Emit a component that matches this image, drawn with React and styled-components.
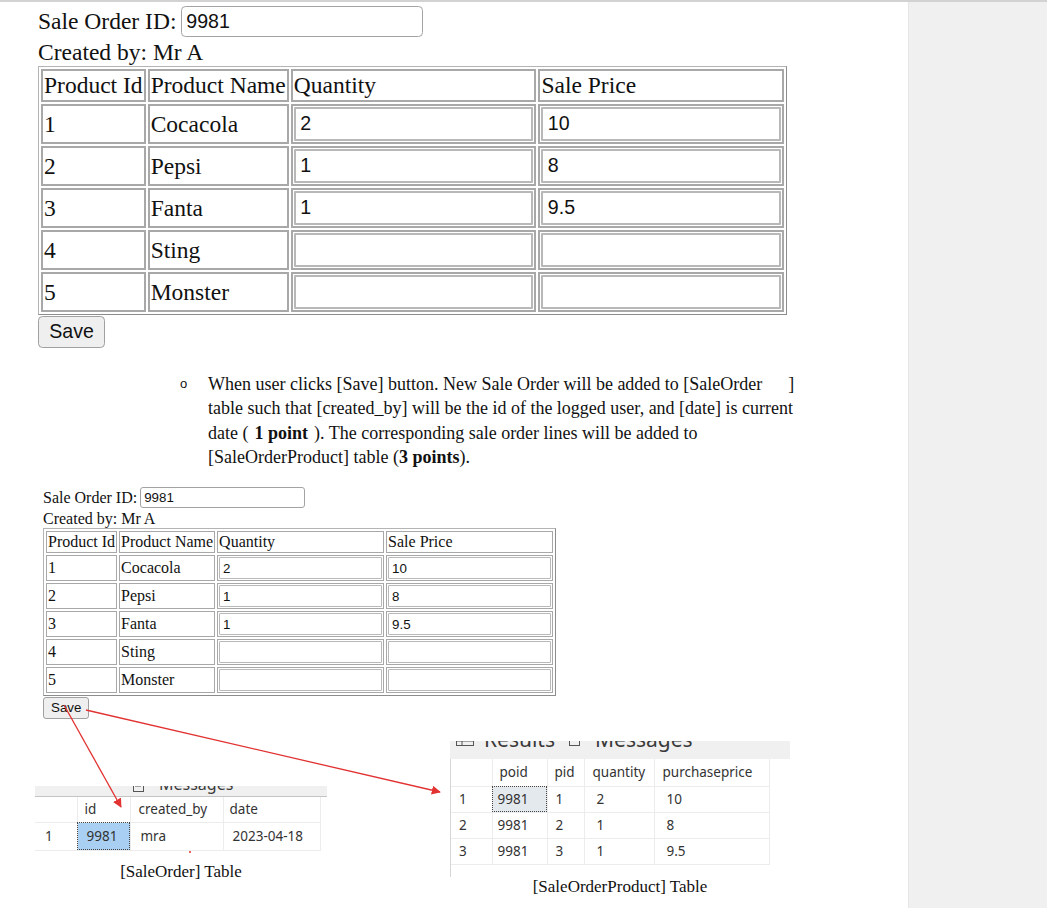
import React from "react";
import styled, { createGlobalStyle } from "styled-components";

const GlobalStyle = createGlobalStyle`
  html, body { margin: 0; padding: 0; background: #fff; }
  body { font-family: "Liberation Serif", "Times New Roman", serif; color: #111; }
`;

const Page = styled.div`
  display: flex;
  width: 1047px;
  height: 908px;
  border-top: 2px solid #d2d2d2;
  box-sizing: border-box;
  overflow: hidden;
`;

const Sheet = styled.main`
  position: relative;
  width: 908px;
  background: #fff;
`;

const SidePanel = styled.aside`
  flex: 1;
  background: #f0f0f0;
  border-left: 1px solid #e6e6e6;
`;

/* ---------- sale order form (rendered at two zoom levels) ---------- */

const FormBlock = styled.div`
  margin: ${p => p.$top}px 0 0 ${p => p.$left}px;
  font-family: "Liberation Serif", "Times New Roman", serif;
  font-size: ${p => 16 * p.$s}px;
`;

const FieldLine = styled.div`
  display: flex;
  align-items: center;
  gap: ${p => 3 * p.$s}px;
  height: ${p => p.$h * p.$s}px;
  white-space: nowrap;
`;

const TextBox = styled.input`
  box-sizing: border-box;
  width: ${p => 165 * p.$s}px;
  height: ${p => 21 * p.$s}px;
  padding: 0 ${p => 3 * p.$s}px;
  border: 1px solid #a3a3a3;
  border-radius: ${p => 3 * p.$s}px;
  font-family: "Liberation Sans", Arial, sans-serif;
  font-size: ${p => 13.33 * p.$s}px;
  color: #111;
  background: #fff;
  outline: none;
`;

const OrderTable = styled.table`
  border-collapse: separate;
  border-spacing: ${p => 2 * p.$s}px;
  border: 1px solid #b4b4b4;
  border-right-color: #8c8c8c;
  border-bottom-color: #8c8c8c;
`;

const Cell = styled.td`
  border: ${p => (p.$s > 1.2 ? 2 : 1)}px solid #a8a8a8;
  padding: 1px;
  text-align: left;
  font-weight: normal;
  line-height: ${p => 18 * p.$s}px;
  vertical-align: middle;
  white-space: nowrap;
`;

const CellBox = styled.input`
  box-sizing: border-box;
  display: block;
  width: ${p => 163 * p.$s}px;
  height: ${p => p.$h}px;
  padding: 0 ${p => 3 * p.$s}px;
  border: ${p => (p.$s > 1.2 ? 2 : 1)}px solid #b8b8b8;
  border-radius: 1px;
  font-family: "Liberation Sans", Arial, sans-serif;
  font-size: ${p => 13.33 * p.$s}px;
  color: #111;
  background: #fff;
  outline: none;
`;

const SaveButton = styled.button`
  display: block;
  margin-top: 1px;
  height: ${p => 21.5 * p.$s}px;
  padding: 0 ${p => 7 * p.$s}px;
  border: 1px solid #a0a0a0;
  border-radius: ${p => 3 * p.$s}px;
  background: #efefef;
  font-family: "Liberation Sans", Arial, sans-serif;
  font-size: ${p => 13.33 * p.$s}px;
  color: #111;
`;

const products = [
  { id: 1, name: "Cocacola", qty: "2", price: "10" },
  { id: 2, name: "Pepsi", qty: "1", price: "8" },
  { id: 3, name: "Fanta", qty: "1", price: "9.5" },
  { id: 4, name: "Sting", qty: "", price: "" },
  { id: 5, name: "Monster", qty: "", price: "" },
];

function SaleOrderForm({ s, left, top, boxH }) {
  return (
    <FormBlock $s={s} $left={left} $top={top}>
      <FieldLine $s={s} $h={24}>
        Sale Order ID:
        <TextBox $s={s} defaultValue="9981" readOnly />
      </FieldLine>
      <FieldLine $s={s} $h={18.5}>Created by: Mr A</FieldLine>
      <OrderTable $s={s}>
        <thead>
          <tr>
            <Cell as="th" $s={s}>Product Id</Cell>
            <Cell as="th" $s={s}>Product Name</Cell>
            <Cell as="th" $s={s}>Quantity</Cell>
            <Cell as="th" $s={s}>Sale Price</Cell>
          </tr>
        </thead>
        <tbody>
          {products.map(p => (
            <tr key={p.id}>
              <Cell $s={s}>{p.id}</Cell>
              <Cell $s={s}>{p.name}</Cell>
              <Cell $s={s}><CellBox $s={s} $h={boxH} defaultValue={p.qty} readOnly /></Cell>
              <Cell $s={s}><CellBox $s={s} $h={boxH} defaultValue={p.price} readOnly /></Cell>
            </tr>
          ))}
        </tbody>
      </OrderTable>
      <SaveButton $s={s}>Save</SaveButton>
    </FormBlock>
  );
}

/* ---------- requirement note ---------- */

const Note = styled.div`
  display: flex;
  margin: 24px 0 0 180px;
  font-family: "Liberation Serif", "Times New Roman", serif;
  font-size: 18px;
  line-height: 24.5px;
  color: #111;
`;

const Bullet = styled.span`
  width: 28px;
  flex: none;
  font-family: "Liberation Sans", Arial, sans-serif;
  font-size: 13px;
`;

const NoteLine = styled.div`
  white-space: nowrap;
`;

const Gap = styled.span`
  display: inline-block;
  width: ${p => p.$w}px;
`;

/* ---------- SSMS result grids ---------- */

const ResultsRow = styled.div`
  display: flex;
  align-items: flex-start;
  margin-top: 22px;
`;

const ResultPane = styled.div`
  width: ${p => p.$w}px;
  margin: ${p => p.$top}px 0 0 ${p => p.$left}px;
`;

/* the tab captions are cut by the screenshot crop, as in the source */
const TabStrip = styled.div`
  display: flex;
  align-items: flex-end;
  gap: ${p => p.$gap}px;
  height: ${p => p.$h}px;
  padding-left: ${p => p.$pad}px;
  overflow: hidden;
  background: #f0f0f0;
  border-bottom: 1px solid ${p => p.$line};
`;

const TabLabel = styled.span`
  display: flex;
  align-items: center;
  gap: 10px;
  margin-bottom: ${p => p.$drop}px;
  font-family: "Noto Sans", "Open Sans", sans-serif;
  font-size: ${p => p.$size}px;
  line-height: ${p => p.$size + 1}px;
  color: #3a3a3a;
  white-space: nowrap;
`;

const GridBody = styled.div`
  border-left: ${p => (p.$edge ? "1px solid #d6d6d6" : "none")};
  padding-bottom: ${p => p.$tail}px;
`;

const Grid = styled.table`
  border-collapse: collapse;
  table-layout: fixed;
  font-family: "Noto Sans", "Open Sans", sans-serif;
  font-size: 13.5px;
  color: #333;
`;

const GridCell = styled.td`
  height: ${p => p.$h}px;
  padding: 0 0 0 ${p => p.$pad ?? 7}px;
  border-right: 1px solid #ececec;
  border-bottom: 1px solid #ececec;
  font-weight: normal;
  text-align: left;
  white-space: nowrap;
  background: ${p => p.$sel || "transparent"};
  outline: ${p => (p.$sel ? "1px dotted #444" : "none")};
  outline-offset: -1px;
`;

const Caption = styled.div`
  text-align: center;
  font-family: "Liberation Serif", "Times New Roman", serif;
  font-size: 17px;
  color: #111;
  margin-top: ${p => p.$top}px;
`;

const GridIcon = () => (
  <svg width="18" height="15" viewBox="0 0 18 15">
    <rect x="0.5" y="0.5" width="17" height="14" fill="none" stroke="#555" />
    <path d="M0 5h18M0 10h18M6 0v15" stroke="#555" />
  </svg>
);

const MsgIcon = () => (
  <svg width="16" height="15" viewBox="0 0 16 15">
    <rect x="0.5" y="0.5" width="10" height="14" fill="none" stroke="#555" />
    <path d="M2 5h6M2 9h6M12 8h4" stroke="#555" />
  </svg>
);

function SaleOrderGrid() {
  const cols = [42, 53, 93, 97];
  return (
    <ResultPane $w={292} $left={35} $top={45}>
      <TabStrip $h={10} $pad={98} $gap={12} $line="#c4c4c4">
        <TabLabel $size={16} $drop={3}><MsgIcon />Messages</TabLabel>
      </TabStrip>
      <GridBody $tail={0}>
        <Grid>
          <colgroup>{cols.map((w, i) => <col key={i} style={{ width: w }} />)}</colgroup>
          <thead>
            <tr>
              <GridCell as="th" $h={25} />
              <GridCell as="th" $h={25}>id</GridCell>
              <GridCell as="th" $h={25} $pad={8}>created_by</GridCell>
              <GridCell as="th" $h={25} $pad={6}>date</GridCell>
            </tr>
          </thead>
          <tbody>
            <tr>
              <GridCell $h={27} $pad={10}>1</GridCell>
              <GridCell $h={27} $pad={9} $sel="#a9d0f2">9981</GridCell>
              <GridCell $h={27} $pad={10}>mra</GridCell>
              <GridCell $h={27} $pad={9}>2023-04-18</GridCell>
            </tr>
          </tbody>
        </Grid>
      </GridBody>
      <Caption $top={11}>[SaleOrder] Table</Caption>
    </ResultPane>
  );
}

const lines = [
  { no: 1, poid: "9981", pid: "1", qty: "2", price: "10" },
  { no: 2, poid: "9981", pid: "2", qty: "1", price: "8" },
  { no: 3, poid: "9981", pid: "3", qty: "1", price: "9.5" },
];

function SaleOrderProductGrid() {
  const cols = [41, 55, 37, 70, 115];
  return (
    <ResultPane $w={340} $left={123} $top={0}>
      <TabStrip $h={17} $pad={6} $gap={14} $line="#f0f0f0">
        <TabLabel $size={21} $drop={8}><GridIcon />Results</TabLabel>
        <TabLabel $size={21} $drop={8}><MsgIcon />Messages</TabLabel>
      </TabStrip>
      <GridBody $edge $tail={12}>
        <Grid>
          <colgroup>{cols.map((w, i) => <col key={i} style={{ width: w }} />)}</colgroup>
          <thead>
            <tr>
              <GridCell as="th" $h={27} />
              <GridCell as="th" $h={27}>poid</GridCell>
              <GridCell as="th" $h={27}>pid</GridCell>
              <GridCell as="th" $h={27} $pad={8}>quantity</GridCell>
              <GridCell as="th" $h={27} $pad={8}>purchaseprice</GridCell>
            </tr>
          </thead>
          <tbody>
            {lines.map(r => (
              <tr key={r.no}>
                <GridCell $h={25} $pad={8}>{r.no}</GridCell>
                <GridCell $h={25} $pad={5} $sel={r.no === 1 ? "#e4e9ee" : ""}>{r.poid}</GridCell>
                <GridCell $h={25} $pad={8}>{r.pid}</GridCell>
                <GridCell $h={25} $pad={12}>{r.qty}</GridCell>
                <GridCell $h={25} $pad={12}>{r.price}</GridCell>
              </tr>
            ))}
          </tbody>
        </Grid>
      </GridBody>
      <Caption $top={0}>[SaleOrderProduct] Table</Caption>
    </ResultPane>
  );
}

/* ---------- red annotation arrows ---------- */

const Overlay = styled.svg`
  position: absolute;
  left: 0;
  top: 0;
  pointer-events: none;
`;

const Arrows = () => (
  <Overlay width="908" height="906" viewBox="0 0 908 906">
    <defs>
      <marker id="head" viewBox="0 0 10 10" refX="9" refY="5" markerWidth="7" markerHeight="7" orient="auto">
        <path d="M0 0L10 5L0 10z" fill="#e23232" />
      </marker>
    </defs>
    <line x1="64" y1="703" x2="121" y2="805" stroke="#e23232" strokeWidth="1.3" markerEnd="url(#head)" />
    <line x1="86" y1="708" x2="440" y2="790" stroke="#e23232" strokeWidth="1.3" markerEnd="url(#head)" />
    <circle cx="190" cy="850" r="1" fill="#e23232" />
  </Overlay>
);

export default function App() {
  return (
    <>
      <GlobalStyle />
      <Page>
        <Sheet>
          <SaleOrderForm s={1.47} left={38} top={2} boxH={34} />
          <Note>
            <Bullet>o</Bullet>
            <div>
              <NoteLine>
                When user clicks [Save] button. New Sale Order will be added to [SaleOrder<Gap $w={26} />]
              </NoteLine>
              <NoteLine>
                table such that [created_by] will be the id of the logged user, and [date] is current
              </NoteLine>
              <NoteLine>
                date (<Gap $w={6} /><b>1 point</b><Gap $w={6} />). The corresponding sale order lines will be added to
              </NoteLine>
              <NoteLine>
                [SaleOrderProduct] table (<b>3 points</b>).
              </NoteLine>
            </div>
          </Note>
          <SaleOrderForm s={1} left={43} top={16} boxH={22} />
          <ResultsRow>
            <SaleOrderGrid />
            <SaleOrderProductGrid />
          </ResultsRow>
          <Arrows />
        </Sheet>
        <SidePanel />
      </Page>
    </>
  );
}
